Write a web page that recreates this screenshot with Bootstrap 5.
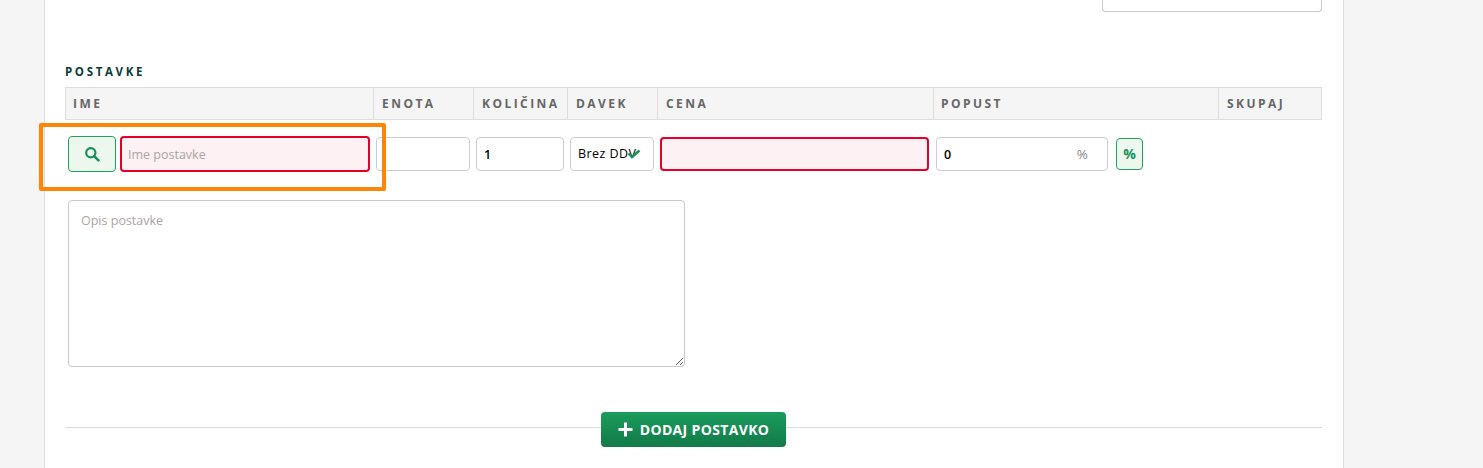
<!DOCTYPE html>
<html lang="sl">
<head>
<meta charset="utf-8">
<title>Postavke</title>
<link href="https://cdn.jsdelivr.net/npm/bootstrap@5.3.0/dist/css/bootstrap.min.css" rel="stylesheet">
<style>
html,body{height:468px;overflow:hidden}
body{background:#f5f5f5;font-family:"Open Sans",sans-serif;font-size:12.5px;color:#000}
.sheet{position:relative;margin-left:44px;width:1300px;height:468px;background:#fff;border-left:1px solid #ddd;border-right:1px solid #ddd;padding:0 21px 0 20px}
.top-field{display:block;margin-left:auto;width:220px;height:12px;border:1px solid #ccc;border-top:0;border-radius:0 0 4px 4px}
.sec-title{margin:51px 0 0;height:24px;padding-top:1px;line-height:16px;font-size:11.5px;font-weight:700;letter-spacing:2.65px;color:#0b3a3a}
.items-grid{display:grid;grid-template-columns:308px 100px 94px 90px 276px 285px 104px}
.items-head{height:33px;background:#f5f5f5;border:1px solid #ddd;border-width:1px 0}
.items-head>div{border-left:1px solid #ddd;line-height:31px;padding-left:8px;font-size:12px;font-weight:700;letter-spacing:2.45px;color:#666;white-space:nowrap}
.items-head>div:first-child,.items-head>div:nth-child(6){padding-left:7px}
.items-head>div:last-child{border-right:1px solid #ddd}
.items-row{height:80px;align-items:start}
.cell-flex{display:flex;align-items:center;height:36px;margin-top:16px}
.cell-first{padding-left:3px}
.fld{height:34px;border:1px solid #ccc;border-radius:4px;background:#fff;font-size:12.5px;font-weight:600;color:#000;padding:0 7px;outline:0;box-shadow:none;font-family:inherit}
.fld.form-control{min-height:0}
.fld.bad{height:36px;border:2px solid #e4002b;background:#fdf1f3;font-weight:400;padding:0 6px}
.fld::placeholder{color:#aca4a4;font-weight:400;opacity:1}
.search-btn{width:48px;height:36px;padding:0;border:1px solid #1ca35f;border-radius:4px;background:#edf7ee;display:flex;align-items:center;justify-content:center}
.pct-btn{width:27px;height:32px;padding:0;margin-left:8px;border:1px solid #1ca35f;border-radius:4px;background:#edf7ee;color:#15925a;font-size:14px;font-weight:700;line-height:30px;text-align:center}
.pct-wrap{position:relative;width:172px;margin-left:3px}
.pct-sign{position:absolute;right:20px;top:7px;font-size:13.5px;line-height:20px;color:#888}
.sel-box{display:flex;align-items:center;width:84px;margin-left:3px;letter-spacing:.45px;font-weight:500;line-height:32px;white-space:nowrap;position:relative;overflow:hidden}
.sel-check{position:absolute;left:56px;top:11px}
.w-enota{width:94px;margin-left:3px}
.w-kol{width:88px;margin-left:3px}
.fld.w-cena{width:269px;height:34px;margin-left:3px}
.w-ime{width:250px}
.desc{display:block;width:617px;height:167px;margin:0 0 0 3px;padding:11px 12px;line-height:18px;font-weight:400;resize:both;border-color:#c8c8c8}
.add-zone{position:relative;margin-top:45px;height:35px;display:flex;justify-content:center}
.add-zone::before{content:"";position:absolute;left:0;right:0;top:15px;border-top:1px solid #ddd}
.add-btn{position:relative;width:185px;height:35px;padding:0 0 1px;display:flex;align-items:center;justify-content:center;gap:7px;border:0;border-radius:4px;background:linear-gradient(#1b9c5c,#127a49);color:#fff;font-size:14px;font-weight:700;letter-spacing:.35px}
.callout{position:absolute;left:-6px;top:123px;width:347px;height:68px;border:4px solid #ff8506;border-radius:2px;pointer-events:none}
</style>
</head>
<body>
<div class="sheet">
  <div class="top-field"></div>
  <h6 class="sec-title text-uppercase">Postavke</h6>
  <div class="items-grid items-head text-uppercase">
    <div>Ime</div><div>Enota</div><div>Količina</div><div>Davek</div><div>Cena</div><div>Popust</div><div>Skupaj</div>
  </div>
  <div class="items-grid items-row">
    <div class="cell-flex cell-first gap-1">
      <button type="button" class="btn search-btn" aria-label="Išči">
        <svg width="16" height="16" viewBox="0 0 16 16" fill="none" stroke="#15925a" stroke-width="2.2"><circle cx="6.8" cy="6.8" r="4.6"/><path d="M10.2 10.2 14.4 14.4" stroke-linecap="round" stroke-width="2.6"/></svg>
      </button>
      <input class="form-control fld bad w-ime" placeholder="Ime postavke">
    </div>
    <div class="cell-flex"><input class="form-control fld w-enota"></div>
    <div class="cell-flex"><input class="form-control fld w-kol" value="1"></div>
    <div class="cell-flex"><div class="fld sel-box">Brez DDV
      <svg class="sel-check" width="14" height="10" viewBox="0 0 14 10" fill="none" stroke="#15925a" stroke-width="2.4"><path d="M1.500 4.500 5 8 12.500 1.500"/></svg></div></div>
    <div class="cell-flex"><input class="form-control fld bad w-cena"></div>
    <div class="cell-flex"><div class="pct-wrap"><input class="form-control fld w-100" value="0"><span class="pct-sign">%</span></div><div class="pct-btn">%</div></div>
    <div></div>
  </div>
  <textarea class="form-control fld desc" placeholder="Opis postavke"></textarea>
  <div class="add-zone">
    <button type="button" class="btn add-btn text-uppercase">
      <svg width="15" height="15" viewBox="0 0 14 14" fill="#fff"><path d="M5.600 .5h2.800v5.100h5.100v2.800H8.400v5.100H5.600V8.400H.5V5.600h5.100z"/></svg>
      Dodaj postavko
    </button>
  </div>
  <div class="callout"></div>
</div>
</body>
</html>
